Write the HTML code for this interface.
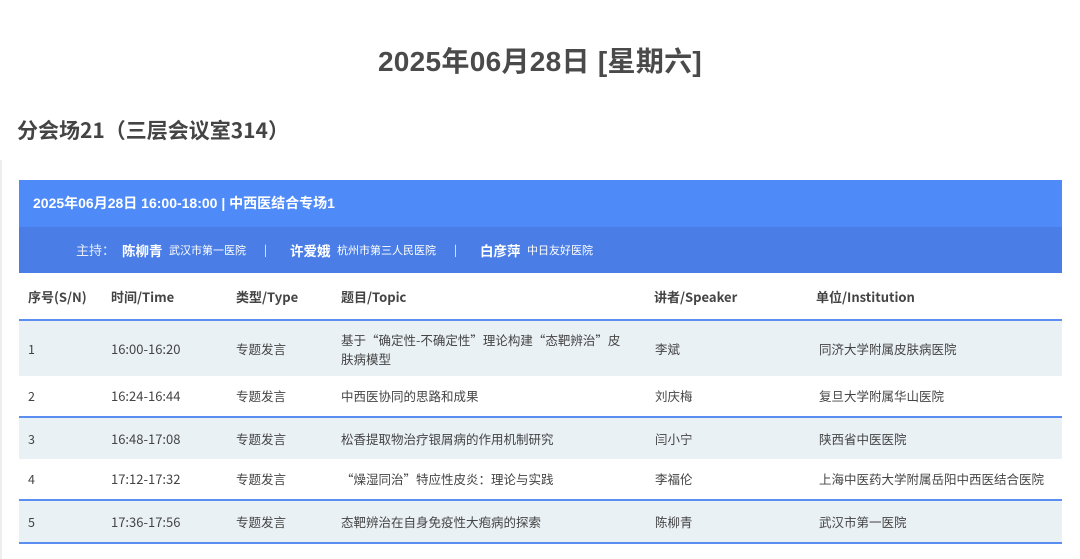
<!DOCTYPE html>
<html><head><meta charset="utf-8"><style>
*{margin:0;padding:0;box-sizing:border-box}
body{width:1080px;height:559px;background:#fff;font-family:"Liberation Sans","Noto Sans CJK SC",sans-serif;color:#333;position:relative;overflow:hidden}
.t{position:absolute;left:0;width:1080px;top:43px;text-align:center;font-size:28px;font-weight:bold;color:#4a4a4a;line-height:38px;letter-spacing:0.3px}
.s{position:absolute;left:17px;top:116px;font-size:21px;font-weight:bold;color:#444;line-height:28px;font-family:"Noto Sans CJK SC",sans-serif}
.edge{position:absolute;left:0;top:160px;width:2px;height:399px;background:#eee}
.box{position:absolute;left:19px;top:180px;width:1043px}
.h1{height:47px;background:#4e8af8;color:#fff;font-size:14px;font-weight:bold;padding-left:14px;line-height:47px}
.h2{height:46px;background:#4a7ee6;color:#fff;font-size:11px;line-height:46px;position:relative;white-space:nowrap;font-family:"Noto Sans CJK SC",sans-serif}
.h2 span{position:absolute;top:0}
.h2 b{position:absolute;top:0;font-size:13.5px}
.row{position:relative;font-size:12.5px;color:#444;font-family:"Noto Sans CJK SC",sans-serif}
.row span{position:absolute;top:0}
.hd{height:48px;font-weight:bold;font-size:13px;color:#444;border-bottom:2px solid #5b8ef0}
.hd span{line-height:48px}
.bg{background:#eaf1f5}
.bb{border-bottom:2px solid #5b8ef0}
.n{font-size:13px}
</style></head><body>
<div class="t">2025年06月28日 [星期六]</div>
<div class="s">分会场21（三层会议室314）</div>
<div class="edge"></div>
<div class="box">
<div class="h1">2025年06月28日 16:00-18:00 | 中西医结合专场1</div>
<div class="h2"><span style="left:57px;font-size:13px;opacity:.85">主持：</span><b style="left:103px">陈柳青</b><span style="left:150px">武汉市第一医院</span><span style="left:245px">|</span><b style="left:271px">许爱娥</b><span style="left:318px">杭州市第三人民医院</span><span style="left:435px">|</span><b style="left:461px">白彦萍</b><span style="left:508px">中日友好医院</span></div>
<div class="row hd"><span style="left:9px">序号(S/N)</span><span style="left:92px">时间/Time</span><span style="left:217px">类型/Type</span><span style="left:322px">题目/Topic</span><span style="left:635px">讲者/Speaker</span><span style="left:797px">单位/Institution</span></div>
<div class="row bg" style="height:55px;line-height:55px"><span style="left:9px">1</span><span class="n" style="left:92px">16:00-16:20</span><span style="left:217px">专题发言</span><span style="left:322px;top:9px;line-height:19px;width:286px">基于“确定性-不确定性”理论构建“态靶辨治”皮肤病模型</span><span style="left:636px">李斌</span><span style="left:800px">同济大学附属皮肤病医院</span></div>
<div class="row bb" style="height:42px;line-height:40px"><span style="left:9px">2</span><span class="n" style="left:92px">16:24-16:44</span><span style="left:217px">专题发言</span><span style="left:322px">中西医协同的思路和成果</span><span style="left:636px">刘庆梅</span><span style="left:800px">复旦大学附属华山医院</span></div>
<div class="row bg" style="height:41px;line-height:41px"><span style="left:9px">3</span><span class="n" style="left:92px">16:48-17:08</span><span style="left:217px">专题发言</span><span style="left:322px">松香提取物治疗银屑病的作用机制研究</span><span style="left:636px">闫小宁</span><span style="left:800px">陕西省中医医院</span></div>
<div class="row bb" style="height:42px;line-height:40px"><span style="left:9px">4</span><span class="n" style="left:92px">17:12-17:32</span><span style="left:217px">专题发言</span><span style="left:322px">“燥湿同治”特应性皮炎：理论与实践</span><span style="left:636px">李福伦</span><span style="left:800px">上海中医药大学附属岳阳中西医结合医院</span></div>
<div class="row bg bb" style="height:43px;line-height:41px"><span style="left:9px">5</span><span class="n" style="left:92px">17:36-17:56</span><span style="left:217px">专题发言</span><span style="left:322px">态靶辨治在自身免疫性大疱病的探索</span><span style="left:636px">陈柳青</span><span style="left:800px">武汉市第一医院</span></div>
</div>
</body></html>
